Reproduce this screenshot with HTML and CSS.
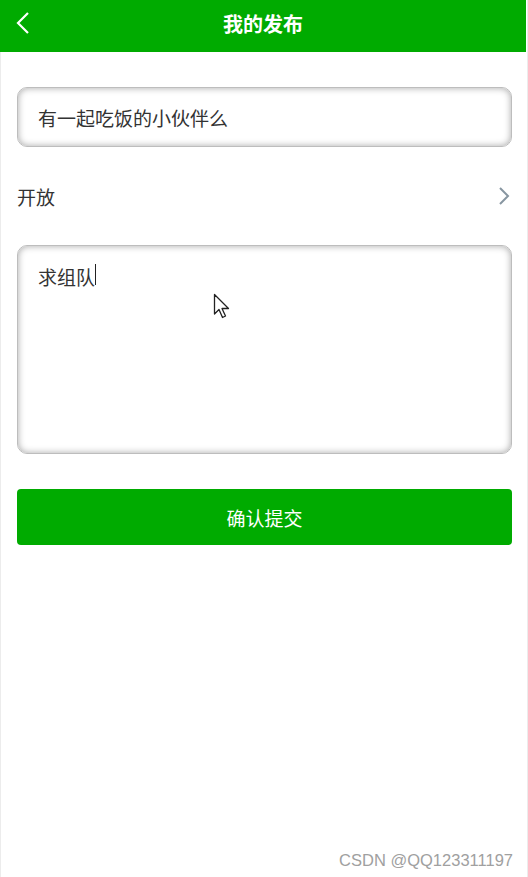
FILE: index.html
```html
<!DOCTYPE html>
<html>
<head>
<meta charset="UTF-8">
<title>我的发布</title>
<link rel="stylesheet" href="styles.css">
</head>
<body>
   <div class="page">
      <div class="header">
         <span class="back">
            <svg width="16" height="24" viewBox="0 0 16 24"><path d="M13 2 L3 12 L13 22" fill="none" stroke="#fff" stroke-width="2.2"/></svg>
         </span>
         <h1 class="title">我的发布</h1>
      </div>
      <div class="content">
         <div class="field">有一起吃饭的小伙伴么</div>
         <div class="row">
            <span>开放</span>
            <svg width="12" height="20" viewBox="0 0 12 20"><path d="M2 2 L10 10 L2 18" fill="none" stroke="#8796a1" stroke-width="2"/></svg>
         </div>
         <div class="field area">求组队<span class="caret"></span></div>
         <div class="submit">确认提交</div>
      </div>
      <div class="mark">CSDN @QQ123311197</div>
      <svg class="cursor" width="20" height="28" viewBox="0 0 20 28"><path d="M1.5 1.5 L1.5 21 L6 16.5 L9.5 24.5 L12.5 23 L9 15.5 L15.5 15.5 Z" fill="#fff" stroke="#222" stroke-width="1.3" stroke-linejoin="round"/></svg>
   </div>
</body>
</html>
```

FILE: styles.css
```css
body {
  margin: 0;
  padding: 0;
  font-family: "Microsoft YaHei", "Noto Sans CJK SC", sans-serif;
  background-color: #fff;
}
.page {
  position: relative;
  height: 877px;
  border-left: 1px solid #ececec;
  border-right: 1px solid #ececec;
  box-sizing: border-box;
  width: 528px;
}
.header {
  position: relative;
  height: 52px;
  background-color: #00ab00;
  display: flex;
  align-items: center;
  justify-content: center;
  margin-left: -1px;
  margin-right: 1px;
}
.back {
  position: absolute;
  left: 15px;
  top: 11px;
}
.title {
  margin: 0;
  color: #fff;
  font-size: 20px;
  font-weight: bold;
  margin-top: -6px;
}
.content {
  padding: 35px 15px 0 16px;
  display: flex;
  flex-direction: column;
}
.field {
  height: 60px;
  box-sizing: border-box;
  border: 1px solid #bdbdbd;
  border-radius: 10px;
  box-shadow: inset 0 0 7px rgba(0, 0, 0, 0.35);
  padding: 0 20px;
  display: flex;
  align-items: center;
  font-size: 19px;
  color: #333;
}
.row {
  display: flex;
  justify-content: space-between;
  align-items: center;
  height: 98px;
  font-size: 19px;
  color: #333;
  padding-right: 2px;
}
.area {
  height: 209px;
  align-items: flex-start;
  padding-top: 17px;
}
.caret {
  display: inline-block;
  width: 1px;
  height: 21px;
  background-color: #222;
  margin-top: 1px;
}
.submit {
  margin-top: 35px;
  height: 56px;
  background-color: #00ab00;
  border-radius: 4px;
  color: #fff;
  font-size: 19px;
  display: flex;
  align-items: center;
  justify-content: center;
}
.mark {
  position: absolute;
  right: 14px;
  bottom: 7px;
  font-family: "Liberation Sans", Arial, sans-serif;
  font-size: 16.5px;
  color: #a0a0a0;
}
.cursor {
  position: absolute;
  left: 212px;
  top: 293px;
}
```
